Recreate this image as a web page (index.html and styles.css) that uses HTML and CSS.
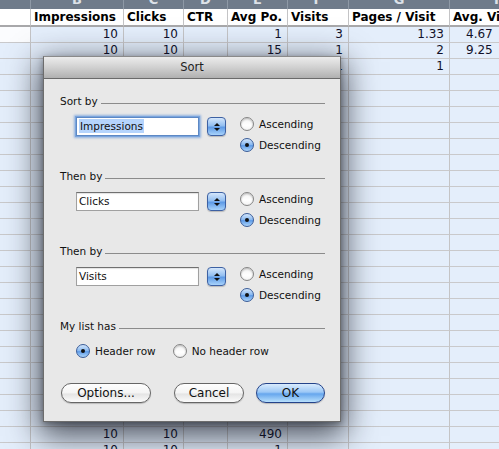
FILE: index.html
```html
<!DOCTYPE html>
<html>
<head>
<meta charset="utf-8">
<title>Sort</title>
<link rel="stylesheet" href="styles.css">
</head>
<body>
<div class="sheet">
  <div class="letters"><span></span><span>B</span><span>C</span><span>D</span><span>E</span><span>F</span><span>G</span><span>H</span></div>
  <div class="row head"><span></span><span>Impressions</span><span>Clicks</span><span>CTR</span><span>Avg Po.</span><span>Visits</span><span>Pages / Visit</span><span>Avg. Visit</span></div>
  <div class="row"><span class="plain"></span><span>10</span><span>10</span><span></span><span>1</span><span>3</span><span>1.33</span><span class="h">4.67</span></div>
  <div class="row"><span></span><span>10</span><span>10</span><span></span><span>15</span><span>1</span><span>2</span><span class="h">9.25</span></div>
  <div class="row"><span></span><span></span><span></span><span></span><span></span><span>1</span><span>1</span><span></span></div>
  <div class="row"><span></span><span></span><span></span><span></span><span></span><span></span><span></span><span></span></div>
  <div class="row"><span></span><span></span><span></span><span></span><span></span><span></span><span></span><span></span></div>
  <div class="row"><span></span><span></span><span></span><span></span><span></span><span></span><span></span><span></span></div>
  <div class="row"><span></span><span></span><span></span><span></span><span></span><span></span><span></span><span></span></div>
  <div class="row"><span></span><span></span><span></span><span></span><span></span><span></span><span></span><span></span></div>
  <div class="row"><span></span><span></span><span></span><span></span><span></span><span></span><span></span><span></span></div>
  <div class="row"><span></span><span></span><span></span><span></span><span></span><span></span><span></span><span></span></div>
  <div class="row"><span></span><span></span><span></span><span></span><span></span><span></span><span></span><span></span></div>
  <div class="row"><span></span><span></span><span></span><span></span><span></span><span></span><span></span><span></span></div>
  <div class="row"><span></span><span></span><span></span><span></span><span></span><span></span><span></span><span></span></div>
  <div class="row"><span></span><span></span><span></span><span></span><span></span><span></span><span></span><span></span></div>
  <div class="row"><span></span><span></span><span></span><span></span><span></span><span></span><span></span><span></span></div>
  <div class="row"><span></span><span></span><span></span><span></span><span></span><span></span><span></span><span></span></div>
  <div class="row"><span></span><span></span><span></span><span></span><span></span><span></span><span></span><span></span></div>
  <div class="row"><span></span><span></span><span></span><span></span><span></span><span></span><span></span><span></span></div>
  <div class="row"><span></span><span></span><span></span><span></span><span></span><span></span><span></span><span></span></div>
  <div class="row"><span></span><span></span><span></span><span></span><span></span><span></span><span></span><span></span></div>
  <div class="row"><span></span><span></span><span></span><span></span><span></span><span></span><span></span><span></span></div>
  <div class="row"><span></span><span></span><span></span><span></span><span></span><span></span><span></span><span></span></div>
  <div class="row"><span></span><span></span><span></span><span></span><span></span><span></span><span></span><span></span></div>
  <div class="row"><span></span><span></span><span></span><span></span><span></span><span></span><span></span><span></span></div>
  <div class="row"><span></span><span>10</span><span>10</span><span></span><span>490</span><span></span><span></span><span></span></div>
  <div class="row"><span></span><span>10</span><span>10</span><span></span><span>490</span><span></span><span></span><span></span></div>
  <div class="row"><span></span><span>10</span><span>10</span><span></span><span>1</span><span></span><span></span><span></span></div>
</div>

<div class="dialog">
  <div class="titlebar">Sort</div>
  <div class="dlg-body">
    <div class="group">
      <div class="legend"><span>Sort by</span><i></i></div>
      <div class="controls">
        <div class="field focused"><span class="sel">Impressions</span></div>
        <div class="stepper"><b class="up"></b><b class="down"></b></div>
        <div class="radios">
          <div class="radio"><span class="dot"></span>Ascending</div>
          <div class="radio on"><span class="dot"></span>Descending</div>
        </div>
      </div>
    </div>
    <div class="group">
      <div class="legend"><span>Then by</span><i></i></div>
      <div class="controls">
        <div class="field">Clicks</div>
        <div class="stepper"><b class="up"></b><b class="down"></b></div>
        <div class="radios">
          <div class="radio"><span class="dot"></span>Ascending</div>
          <div class="radio on"><span class="dot"></span>Descending</div>
        </div>
      </div>
    </div>
    <div class="group">
      <div class="legend"><span>Then by</span><i></i></div>
      <div class="controls">
        <div class="field">Visits</div>
        <div class="stepper"><b class="up"></b><b class="down"></b></div>
        <div class="radios">
          <div class="radio"><span class="dot"></span>Ascending</div>
          <div class="radio on"><span class="dot"></span>Descending</div>
        </div>
      </div>
    </div>
    <div class="group last">
      <div class="legend"><span>My list has</span><i></i></div>
      <div class="inline">
        <div class="radio on"><span class="dot"></span>Header row</div>
        <div class="radio"><span class="dot"></span>No header row</div>
      </div>
    </div>
    <div class="buttons">
      <button class="btn options">Options...</button>
      <button class="btn cancel">Cancel</button>
      <button class="btn ok">OK</button>
    </div>
  </div>
</div>
</body>
</html>
```

FILE: styles.css
```css
* { box-sizing: border-box; }

html, body { margin: 0; padding: 0; }

body {
  width: 499px;
  height: 449px;
  overflow: hidden;
  position: relative;
  background: #e4eefb;
  font-family: "DejaVu Sans", Verdana, sans-serif;
}

/* ---------- worksheet ---------- */
.sheet { font-size: 12px; color: #10102a; }

.letters,
.row {
  display: grid;
  grid-template-columns: 31px 93px 60px 44px 60px 61px 101px 100px;
}

.letters {
  height: 18px;
  margin-top: -9px;
  background: #6f7b8a;
}
.letters span {
  line-height: 18px;
  text-align: center;
  font-weight: bold;
  font-size: 13px;
  color: #dde2e8;
  border-right: 1px solid #8e99a6;
}

.row > span {
  height: 16px;
  line-height: 15px;
  padding: 0 5px;
  text-align: right;
  white-space: nowrap;
  overflow: hidden;
  background: #e4eefb;
  border-right: 1px solid #c4c4c6;
  border-bottom: 1px solid #c9c9cb;
}
.row > span.plain { background: #fbfcfe; }
.row > span.h { text-align: left; padding-left: 16px; }

.row.head > span {
  height: 18px;
  line-height: 16px;
  padding: 0 3px;
  text-align: left;
  font-weight: bold;
  color: #000;
  background: #fff;
  border-bottom: 2px solid #a8a8aa;
}

/* ---------- sheet window ---------- */
.dialog {
  position: absolute;
  left: 43px;
  top: 56px;
  width: 298px;
  height: 366px;
  display: flex;
  flex-direction: column;
  background: #e8e8e8;
  border: 1px solid #6c6c6c;
  border-top-color: #8a8a8a;
  box-shadow: 0 10px 30px 4px rgba(15, 20, 30, 0.72), 0 2px 6px rgba(0, 0, 0, 0.35);
  font-size: 10.5px;
  color: #111;
}

.titlebar {
  flex: none;
  height: 22px;
  line-height: 21px;
  text-align: center;
  font-size: 11.5px;
  color: #1e1e1e;
  background: linear-gradient(#ececec, #d0d0d0 50%, #b0b0b0);
  border-bottom: 1px solid #6a6a6a;
}

.dlg-body {
  padding: 15px 15px 0 16px;
}

.group { margin-bottom: 17px; }
.group.last { margin-bottom: 0; }

.legend {
  display: flex;
  align-items: center;
  height: 14px;
  line-height: 14px;
}
.legend i {
  flex: 1;
  height: 1px;
  margin: 4px 0 0 3px;
  background: #8b8b8b;
}

.controls {
  display: flex;
  align-items: flex-start;
  margin-top: 9px;
  padding-left: 16px;
}

.field {
  width: 123px;
  height: 19px;
  padding-left: 2px;
  line-height: 17px;
  background: #fff;
  border: 1px solid #a0a0a0;
  border-top-color: #707070;
  box-shadow: inset 0 1px 1px rgba(0, 0, 0, 0.12);
}
.field.focused {
  border-color: #5d88c4;
  box-shadow: 0 0 0 1px #7aa5dd, 0 0 2px 2px rgba(110, 155, 220, 0.7);
}
.sel { background: #b5d4fc; padding: 1px 1px; }

.stepper {
  width: 19px;
  height: 19px;
  margin-left: 8px;
  display: flex;
  flex-direction: column;
  align-items: center;
  justify-content: center;
  gap: 2px;
  border: 1px solid #3d61a3;
  border-radius: 4px;
  background: linear-gradient(#d4e6fb, #93bff1 45%, #5f9be6 55%, #a8d3fb);
  box-shadow: 0 1px 1px rgba(0, 0, 0, 0.2);
}
.stepper b {
  width: 0;
  height: 0;
  border-left: 3px solid transparent;
  border-right: 3px solid transparent;
}
.stepper .up { border-bottom: 3px solid #111; }
.stepper .down { border-top: 3px solid #111; }

.radios {
  display: flex;
  flex-direction: column;
  gap: 7px;
  margin-left: 14px;
}

.radio {
  display: flex;
  align-items: center;
  gap: 5px;
  height: 14px;
  white-space: nowrap;
}

.dot {
  position: relative;
  flex: none;
  width: 14px;
  height: 14px;
  border-radius: 50%;
  border: 1px solid #858585;
  background: linear-gradient(#f2f2f2, #ffffff 60%, #f4f4f4);
  box-shadow: inset 0 1px 2px rgba(0, 0, 0, 0.25);
}
.radio.on .dot {
  border-color: #3a5c98;
  background: linear-gradient(#d3e6fb, #88b8f0 48%, #5e9be7 55%, #acd5fb);
  box-shadow: none;
}
.radio.on .dot::after {
  content: "";
  position: absolute;
  left: 4px;
  top: 4px;
  width: 4px;
  height: 4px;
  border-radius: 50%;
  background: #111;
}

.inline {
  display: flex;
  gap: 17px;
  margin-top: 11px;
  padding-left: 16px;
}

.buttons {
  display: flex;
  margin-top: 25px;
  padding-left: 1px;
}

.btn {
  height: 20px;
  padding: 0;
  font: 12px "DejaVu Sans", Verdana, sans-serif;
  line-height: 18px;
  color: #111;
  text-align: center;
  border: 1px solid #666;
  border-radius: 10px;
  background: linear-gradient(#fefefe, #f4f4f4 50%, #e4e4e4 55%, #fbfbfb);
  box-shadow: 0 1px 1px rgba(0, 0, 0, 0.2);
}
.btn.options { width: 90px; }
.btn.cancel { width: 70px; margin-left: 23px; }
.btn.ok {
  width: 69px;
  margin-left: 12px;
  border-color: #24438a;
  background: linear-gradient(#d9ebfd, #9cc8f6 45%, #66a6ed 55%, #b8e0fc);
}
```
